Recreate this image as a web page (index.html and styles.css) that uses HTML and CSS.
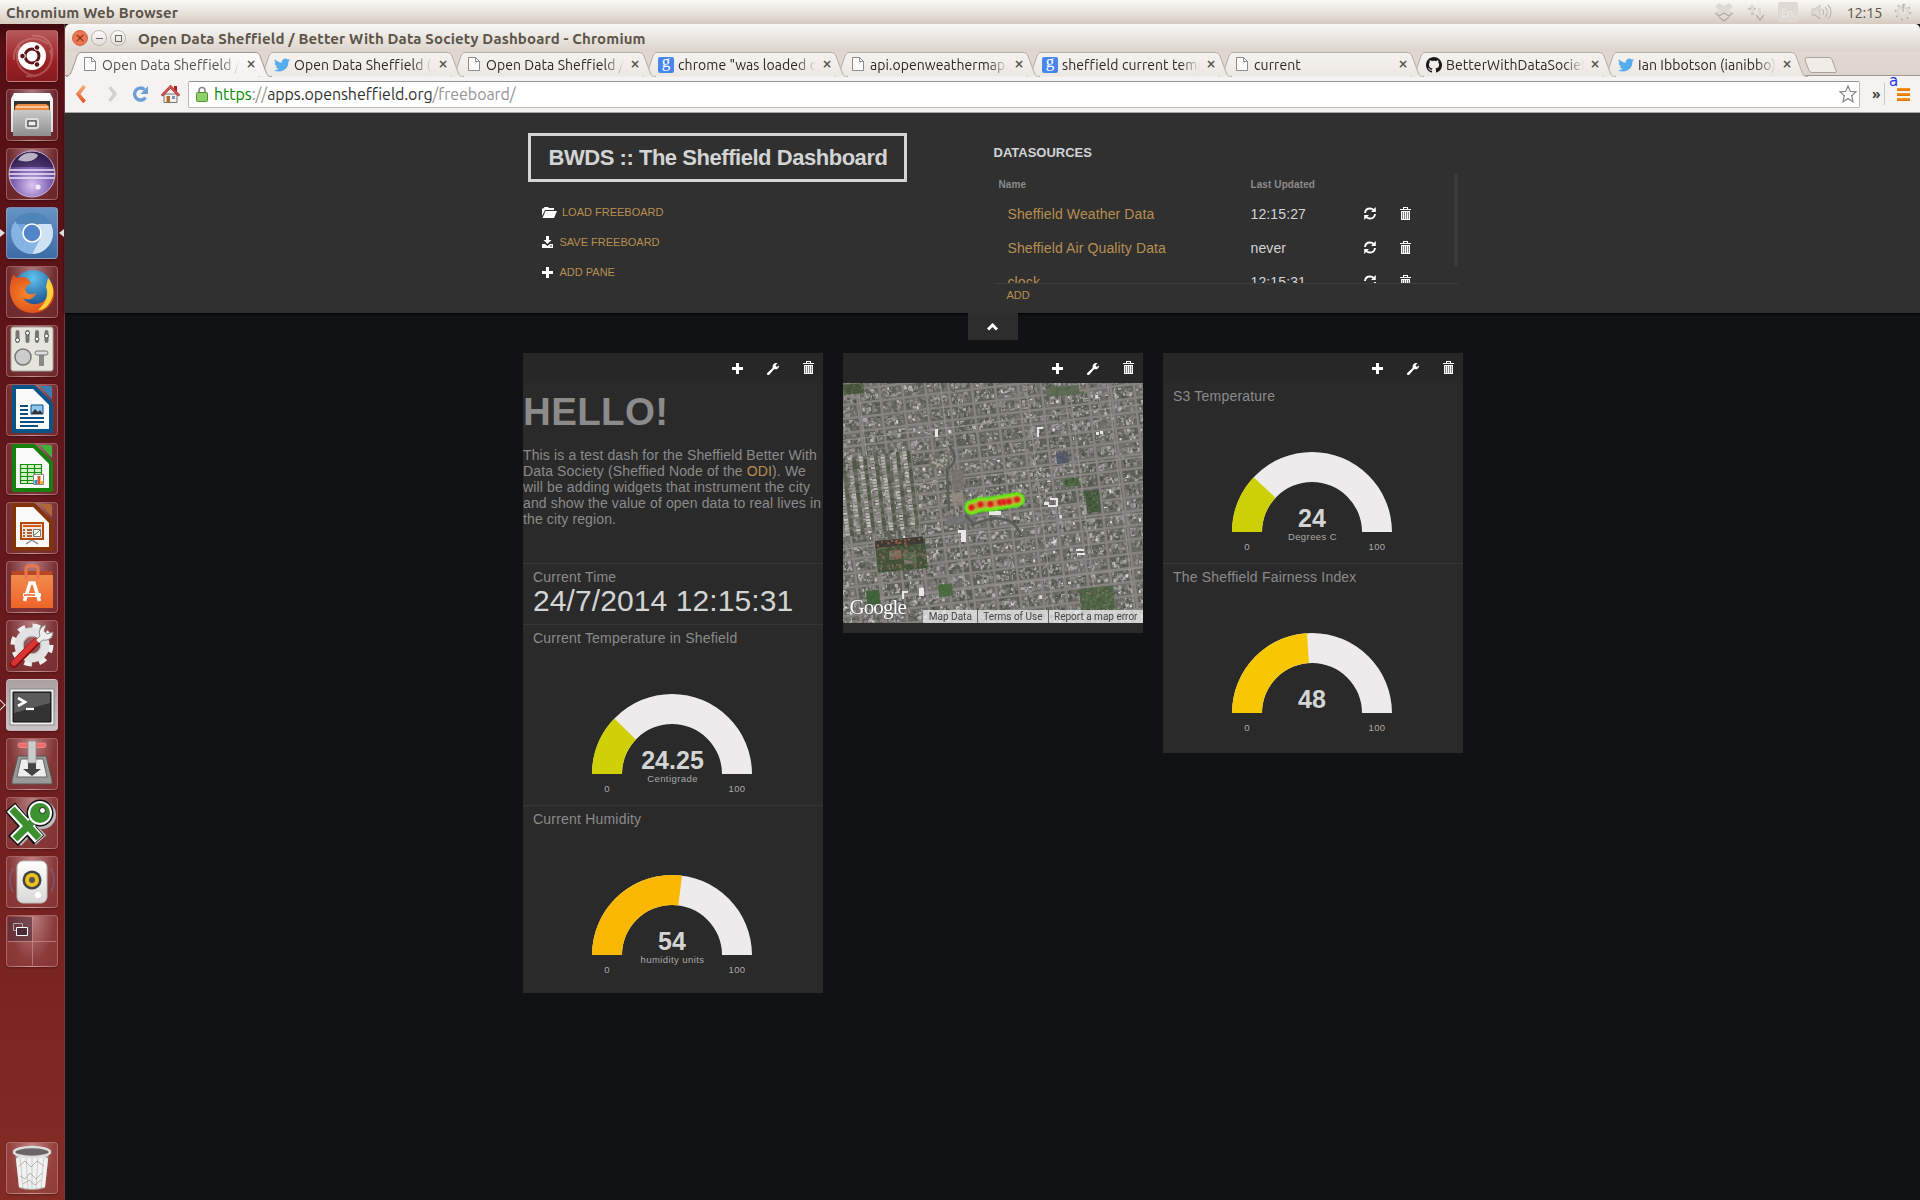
FILE: index.html
```html
<!DOCTYPE html>
<html lang="en">
<head>
<meta charset="utf-8">
<title>Open Data Sheffield / Better With Data Society Dashboard</title>
<link rel="stylesheet" href="styles.css">
</head>
<body>
<svg class="defs" width="0" height="0">
  <defs>
    <linearGradient id="gloss" x1="0" y1="0" x2="0" y2="1"><stop offset="0" stop-color="#fff"/><stop offset="1" stop-color="#d8d8d8"/></linearGradient>
    <linearGradient id="steel" x1="0" y1="0" x2="0" y2="1"><stop offset="0" stop-color="#c9c9c9"/><stop offset="1" stop-color="#8f8f8f"/></linearGradient>
    <linearGradient id="orange" x1="0" y1="0" x2="0" y2="1"><stop offset="0" stop-color="#f7b070"/><stop offset="1" stop-color="#e5532a"/></linearGradient>
    <linearGradient id="bag" x1="0" y1="0" x2="0" y2="1"><stop offset="0" stop-color="#f08a4e"/><stop offset="1" stop-color="#ee6428"/></linearGradient>
    <linearGradient id="tabOn" x1="0" y1="0" x2="0" y2="1"><stop offset="0" stop-color="#fbfaf9"/><stop offset="1" stop-color="#f4f3f2"/></linearGradient>
    <linearGradient id="tabOff" x1="0" y1="0" x2="0" y2="1"><stop offset="0" stop-color="#f6f3f0"/><stop offset="1" stop-color="#ece7e2"/></linearGradient>
    <radialGradient id="orb" cx=".5" cy=".75" r=".7"><stop offset="0" stop-color="#d9c6f2"/><stop offset=".55" stop-color="#8465b4"/><stop offset="1" stop-color="#3a2660"/></radialGradient>
    <radialGradient id="globe" cx=".5" cy=".2" r=".8"><stop offset="0" stop-color="#5cc3ee"/><stop offset="1" stop-color="#123c80"/></radialGradient>
    <radialGradient id="fox" cx=".4" cy=".5" r=".6"><stop offset="0" stop-color="#f5872b"/><stop offset="1" stop-color="#dd4a18"/></radialGradient>
    <symbol id="plus" viewBox="0 0 11 11"><path d="M4 0h3v4h4v3H7v4H4V7H0V4h4z" fill="#fff"/></symbol>
    <symbol id="wrench" viewBox="0 0 12 12"><path d="M0 10.2L5.7 5C5.3 3.2 6 1.4 7.5.6 8.600 0 9.600 0 10.400.300L8.600 2.200 9 3.500 10.300 3.800 12 2.200C12.200 4 11.500 5.300 10.300 5.900 9.300 6.400 8.200 6.400 7.200 6.100L2 12H.8L0 11.200z" fill="#fff"/></symbol>
    <symbol id="trash" viewBox="0 0 11 13"><path d="M3 0h5v2h3v1H0V2h3zM4 1v1h3V1zM1 4h9v9H1z" fill="#fff" fill-rule="evenodd"/><path d="M2.500 5v7M4.500 5v7M6.500 5v7M8.500 5v7" stroke="#777" stroke-width=".9"/></symbol>
    <symbol id="refresh" viewBox="0 0 12 13"><path d="M1 6C1.300 3 3.500 1.500 6 1.500c1.500 0 2.700.500 3.600 1.400M11 7c-.3 3-2.500 4.500-5 4.500-1.500 0-2.700-.5-3.600-1.400" fill="none" stroke="#fff" stroke-width="1.900"/><path d="M11.800 0v5H7zM.2 13V8H5z" fill="#fff"/></symbol>
    <symbol id="page" viewBox="0 0 12 14"><path d="M1 .5h6.500L11.500 4.500V13.500H.5V.5z" fill="#fdfdfd" stroke="#8b8b8b"/><path d="M7.500.5v4h4" fill="none" stroke="#8b8b8b"/></symbol>
    <symbol id="bird" viewBox="0 0 24 24"><path fill="#55acee" d="M24 4.600a10 10 0 0 1-2.800.8 4.900 4.900 0 0 0 2.200-2.700c-1 .6-2 1-3.100 1.200a4.900 4.900 0 0 0-8.400 4.500A14 14 0 0 1 1.700 3.200a4.900 4.900 0 0 0 1.500 6.500c-.8 0-1.600-.2-2.200-.6a4.900 4.900 0 0 0 3.900 4.900c-.7.200-1.500.2-2.200.1a4.900 4.900 0 0 0 4.600 3.400A9.900 9.900 0 0 1 0 19.500a14 14 0 0 0 21.500-12.400A10 10 0 0 0 24 4.600z"/></symbol>
    <symbol id="cat" viewBox="0 0 16 16"><path fill="#1b1817" d="M8 0C3.580 0 0 3.580 0 8c0 3.540 2.290 6.530 5.470 7.590.4.070.55-.17.55-.38 0-.19-.01-.82-.01-1.490-2.010.37-2.530-.49-2.690-.94-.09-.23-.48-.94-.82-1.130-.28-.15-.68-.52-.01-.53.630-.01 1.080.58 1.230.82.720 1.210 1.870.87 2.330.66.070-.52.280-.87.510-1.070-1.780-.2-3.640-.89-3.640-3.950 0-.87.310-1.590.82-2.150-.08-.2-.36-1.020.08-2.120 0 0 .67-.21 2.200.82.640-.18 1.320-.27 2-.27s1.360.09 2 .27c1.530-1.040 2.200-.82 2.200-.82.440 1.100.16 1.920.08 2.120.51.56.82 1.270.82 2.150 0 3.070-1.870 3.750-3.650 3.950.29.250.54.730.54 1.480 0 1.070-.01 1.930-.01 2.200 0 .21.150.46.550.38A8 8 0 0 0 8 0z"/></symbol>
    <symbol id="shapeOn" viewBox="0 0 206 25"><path d="M0 24.500C4 24 5 21 6.500 17L11 4C12 1.500 13 .5 16 .5H189C192 .5 193 1.500 194 4L200 20C201.500 23.500 202 24.500 206 24.500" fill="url(#tabOn)" stroke="#9d9790"/></symbol>
    <symbol id="shapeOff" viewBox="0 0 206 25"><path d="M0 24.500C4 24 5 21 6.500 17L11 4C12 1.500 13 .5 16 .5H189C192 .5 193 1.500 194 4L200 20C201.500 23.500 202 24.500 206 24.500" fill="url(#tabOff)" stroke="#b4aea8"/></symbol>
  </defs>
</svg>

<header class="panel">
  <span class="panel-title">Chromium Web Browser</span>
  <div class="tray">
    <svg width="20" height="20" viewBox="0 0 20 20"><path d="M5 1l5 3 5-3 4 4-4 3 4 3-4 3-5-3-5 3-4-3 4-3-4-3z" fill="#dedad3"/><path d="M1 11l4 3 5-3 5 3 4-3M5 15l5 4 5-4" fill="none" stroke="#b0aaa2" stroke-width="1.100"/></svg>
    <svg width="18" height="20" viewBox="0 0 18 20"><path d="M5 2L1 7h3v5h3V7h2zM13 18l4-5h-3V6h-3v7H9z" fill="#dedad3"/><path d="M1 7h3M7 7h2M4 12h3M9 13l4 5 4-5" fill="none" stroke="#aba59d" stroke-width="1.200"/></svg>
    <span class="lang">En.</span>
    <svg width="21" height="18" viewBox="0 0 21 18"><path d="M1 6h3l5-4v14l-5-4H1z" fill="#dedad3" stroke="#cdc8c0"/><path d="M1 12h3l5 4M12 12c1-2 1-4-1-6M14 14c3-3 3-7 0-10M17 16c4-4 4-10 0-14" fill="none" stroke="#bdb7af" stroke-width="1.200"/></svg>
    <span class="clock">12:15</span>
    <svg width="18" height="18" viewBox="0 0 18 18"><circle cx="9" cy="9" r="5" fill="none" stroke="#dedad3" stroke-width="3"/><circle cx="9" cy="9" r="7.500" fill="none" stroke="#b7b1a9" stroke-width="1.600" stroke-dasharray="2 3.900"/><path d="M9 1v8" stroke="#aaa49c"/></svg>
  </div>
</header>

<nav class="launcher">
  <div class="tile ubuntu"><svg viewBox="0 0 52 52"><path d="M8 30C6 12 26 2 42 14M44 20c6 16-8 28-24 26M26 6c18-2 24 14 18 28M14 16C6 30 14 44 30 46" fill="none" stroke="#d99" stroke-opacity=".4" stroke-width="2"/><circle cx="26" cy="26" r="14" fill="#fff"/><circle cx="26" cy="26" r="7" fill="none" stroke="#5f1418" stroke-width="3"/><g fill="#5f1418" stroke="#fff"><circle cx="16.500" cy="26" r="2.800"/><circle cx="31" cy="17.500" r="2.800"/><circle cx="31" cy="34.500" r="2.800"/></g></svg></div>
  <div class="tile"><svg viewBox="0 0 52 52"><path d="M8 4h36l3 6v33H5V10z" fill="url(#gloss)"/><path d="M8 12h36v11H8z" fill="#333"/><path d="M9 17l3-2h28l3 2v5H9z" fill="#ee8a3c"/><path d="M10 18h32" stroke="#fff"/><path d="M7 21h38v26H7z" fill="url(#steel)"/><rect x="20" y="30" width="12" height="9" rx="2" fill="#aaa" stroke="#ddd" stroke-width="2"/><rect x="22" y="32" width="8" height="5" fill="#eee" stroke="#333"/></svg></div>
  <div class="tile"><svg viewBox="0 0 52 52"><circle cx="26" cy="26" r="23" fill="url(#orb)" stroke="#c9b8de"/><path d="M5 19C7 9 16 4 26 4s19 5 21 15z" fill="#281840" fill-opacity=".55"/><path d="M12 12c4-8 15-9 20-5-2 6-12 8-20 5z" fill="#fff" fill-opacity=".65"/><path d="M3.500 22h45M3 26h46M3.500 30h45" stroke="#eee6fb" stroke-width="1.300"/><circle cx="32" cy="39" r="2.500" fill="#fff" fill-opacity=".8"/></svg></div>
  <div class="tile chromium focused running"><svg viewBox="0 0 52 52"><circle cx="26" cy="26" r="21" fill="#6fa6dc"/><path d="M6 17C14 2 38 1 45 17z" fill="#4f86b7"/><path d="M45 17a21 21 0 0 1-19 30l9-18-3-12z" fill="#cfe2f3"/><path d="M9 14a21 21 0 0 0 17 33l8-15-14-2z" fill="#86b4e2"/><circle cx="26" cy="26" r="9" fill="#5285c8" stroke="#fff" stroke-width="1.600"/></svg></div>
  <div class="tile"><svg viewBox="0 0 52 52"><circle cx="27" cy="24" r="20" fill="url(#globe)"/><path d="M7 9l5 3c4-2 8-1 10 1l3 4-5 4c-2 5 2 8 7 7l3-1c-2 6-8 8-13 5 5 8 17 8 23 1 5-6 5-14 2-20 8 8 8 19 2 26-9 11-27 10-35 0C2 29 3 18 7 9z" fill="url(#fox)"/><path d="M42 12c7 8 7 19 0 27-3 4-6 5-10 5 8-7 11-16 8-23z" fill="#f9d13e"/></svg></div>
  <div class="tile"><svg viewBox="0 0 52 52"><rect x="5" y="2" width="42" height="44" rx="2" fill="#e6e5dd" stroke="#a6a49b"/><g stroke="#777" stroke-width="4" stroke-linecap="round"><path d="M11.500 7v9M21.500 7v9M31 7v9M40.500 7v9"/></g><g fill="#fff" stroke="#555"><circle cx="11.500" cy="15" r="2"/><circle cx="21.500" cy="8" r="2"/><circle cx="31" cy="14" r="2"/><circle cx="40.500" cy="11" r="2"/></g><circle cx="17" cy="32" r="8" fill="#ccc" stroke="#777" stroke-width="1.500"/><path d="M33 28h5v13h-5z" fill="#888"/><rect x="29" y="26" width="13" height="4" rx="2" fill="#ddd" stroke="#777"/></svg></div>
  <div class="tile"><svg viewBox="0 0 52 52"><path d="M8 3h20l17 17v27H8z" fill="#fafafa" stroke="#0a5488" stroke-width="4" stroke-linejoin="round"/><path d="M34 2h10q2 0 2 2v11z" fill="#3c7fb5"/><path d="M14 22h8M14 26h8M14 30h8M14 34h24M14 38h24M14 42h18" stroke="#0a4f83" stroke-width="2"/><path d="M25 21h12v9H25z" fill="#8cc6ee" stroke="#0a4f83"/><path d="M25 30l4-5 3 3 2-2 3 4z" fill="#333"/></svg></div>
  <div class="tile"><svg viewBox="0 0 52 52"><path d="M8 3h20l17 17v27H8z" fill="#fafafa" stroke="#16800c" stroke-width="4" stroke-linejoin="round"/><path d="M34 2h10q2 0 2 2v11z" fill="#41b038"/><path d="M14.500 21.500h21v19h-21zM21.500 21v20M28.500 21v20M14 25.500h22M14 29.500h22M14 33.500h22M14 37.500h22" fill="#cff5c5" stroke="#188a0e" stroke-width="1.200"/><path d="M27.500 31.500h10v10h-10z" fill="#fff" stroke="#888"/><path d="M30 41v-4" stroke="#2b93d6" stroke-width="3"/><path d="M33 41v-8" stroke="#dd5a1b" stroke-width="3"/><path d="M36 41v-3" stroke="#e9b80f" stroke-width="2"/></svg></div>
  <div class="tile"><svg viewBox="0 0 52 52"><path d="M8 3h20l17 17v27H8z" fill="#fafafa" stroke="#823408" stroke-width="4" stroke-linejoin="round"/><path d="M34 2h10q2 0 2 2v11z" fill="#b06738"/><path d="M15 21h22v16H15z" fill="#fbe3d6" stroke="#b3470c" stroke-width="2"/><path d="M17 24h18" stroke="#cf5b1c" stroke-width="2"/><path d="M17 28h2M17 31h2M17 34h2M21 28h5M21 31h5M21 34h5" stroke="#8f3b0b" stroke-width="1.500"/><path d="M27.500 27.500h7v7h-7z" fill="#fff" stroke="#777"/><path d="M28 33l3-2 3-3" fill="none" stroke="#2c9a2c"/><path d="M26 38l-6 4M26 38l6 4" stroke="#888" stroke-width="1.500"/></svg></div>
  <div class="tile"><svg viewBox="0 0 52 52"><path d="M6 10h40v5H6z" fill="#b94822"/><path d="M5 14h42v33H5z" fill="url(#bag)"/><path d="M20 18V8q0-3 3-3h6q3 0 3 3v10" fill="none" stroke="#e8764e" stroke-width="3"/><path d="M18.500 40l5.500-18h4l5.500 18" fill="none" stroke="#fff" stroke-width="3.500"/><rect x="17" y="32" width="18" height="4" rx="1" fill="#fff"/><path d="M18 34h11" stroke="#e8622b" stroke-width="1.500"/></svg></div>
  <div class="tile"><svg viewBox="0 0 52 52"><circle cx="26" cy="25" r="19" fill="none" stroke="#eee" stroke-width="5" stroke-dasharray="7.500 7.420"/><circle cx="26" cy="25" r="13" fill="none" stroke="#e2e2e2" stroke-width="9"/><circle cx="26" cy="25" r="9" fill="none" stroke="#bbb"/><path d="M8 44L30 22" stroke="#8b0d0f" stroke-width="8" stroke-linecap="round"/><path d="M8 43L30 21" stroke="#d93333" stroke-width="5.500" stroke-linecap="round"/><path d="M30 20l4-4c-2-5 1-10 6-11l-2 6 3 3 6-2c0 6-5 9-10 8l-4 3z" fill="#eee" stroke="#888"/></svg></div>
  <div class="tile terminal running-hollow"><svg viewBox="0 0 52 52"><path d="M4 10h44v36H4z" fill="#eee" stroke="#888"/><path d="M7 13h38v30H7z" fill="#333" stroke="#111"/><path d="M8 14h36v10L8 34z" fill="#5a5a5a"/><path d="M12 19l7 4-7 4" fill="none" stroke="#fff" stroke-width="2.600"/><path d="M20 30h8" stroke="#fff" stroke-width="2.200"/></svg></div>
  <div class="tile"><svg viewBox="0 0 52 52"><rect x="12" y="5" width="28" height="4.500" rx="2" fill="#ef6a6a" stroke="#ffa3a0" stroke-width=".6"/><path d="M12 18h28l6 24v4H6v-4z" fill="#999" stroke="#555"/><path d="M15 21h22l4 18H11z" fill="#eee" stroke="#666"/><path d="M22 3h8v28h5l-9 7-9-7h5z" fill="#444"/><path d="M22 3h8v22h-8z" fill="#ccc" stroke="#888" stroke-width=".7"/></svg></div>
  <div class="tile"><svg viewBox="0 0 52 52"><path d="M6 12L35 43M10 44L27 26" stroke="#bbb" stroke-width="14"/><circle cx="36" cy="18" r="14" fill="#bbb"/><path d="M4 10L33 43M7 44L26 25" stroke="#111" stroke-width="14"/><circle cx="34" cy="16" r="13.500" fill="#111"/><path d="M5 11L33 42M8 43L26 25" stroke="#fff" stroke-width="11"/><circle cx="34" cy="16" r="12" fill="#fff"/><path d="M6 12L33 41M9 42L26 25" stroke="#3c8f2d" stroke-width="7"/><circle cx="34" cy="16" r="10" fill="#3c9130"/><circle cx="36.500" cy="13.500" r="3" fill="#fff" stroke="#222"/></svg></div>
  <div class="tile"><svg viewBox="0 0 52 52"><path d="M7 12C3 19 3 29 7 36M45 12c4 7 4 17 0 24" fill="none" stroke="#7078a8" stroke-opacity=".4" stroke-width="2"/><rect x="11" y="5" width="30" height="42" rx="6" fill="url(#gloss)" stroke="#bbb"/><circle cx="26" cy="24" r="9.500" fill="#444"/><circle cx="26" cy="24" r="7" fill="#e9c21d"/><circle cx="26" cy="24" r="3" fill="#555"/><circle cx="32" cy="39" r="3" fill="#fff"/></svg></div>
  <div class="tile spaces"><svg viewBox="0 0 52 52"><path d="M2 2h24v24H2z" fill="#4e2b3a" fill-opacity=".6"/><path d="M26.500 2v48M2 26.500h48" stroke="#c69093" stroke-opacity=".7"/><path d="M7.500 8.500h9v7h-9z" fill="none" stroke="#aaa"/><path d="M10.500 12.500h11v8h-11z" fill="#4e2b3a" stroke="#fff"/></svg></div>
  <div class="tile trashcan"><svg viewBox="0 0 52 52"><path d="M9 9h34l-4 37q-13 4-26 0z" fill="#a9a5a3"/><path d="M10 17l5-4 5 3 6-4 6 4 5-3 5 4-3 28q-13 4-26 0z" fill="#f1f1f0"/><path d="M13 24l6-5 6 6 6-6 7 5M14 34l5 3 5-6 6 6 6-6M17 42l6-4 6 5 6-5" fill="none" stroke="#b5b5b5"/><path d="M14 14l3 32M20 14l2 33M26 14v34M32 14l-2 33M38 14l-3 32" stroke="#999" stroke-opacity=".4"/><ellipse cx="26" cy="10" rx="18" ry="5" fill="#6a6666" stroke="#ddd" stroke-width="2.500"/></svg></div>
</nav>

<main class="window">
  <div class="titlebar">
    <span class="win-btn close">×</span><span class="win-btn"><i class="bar"></i></span><span class="win-btn"><i class="box"></i></span>
    <span class="win-title">Open Data Sheffield / Better With Data Society Dashboard - Chromium</span>
  </div>
  <div class="tabs">
    <div class="tab on"><svg class="shape"><use href="#shapeOn"/></svg><svg class="fav pg"><use href="#page"/></svg><span class="label">Open Data Sheffield / B</span><span class="x">×</span></div>
    <div class="tab"><svg class="shape"><use href="#shapeOff"/></svg><svg class="fav"><use href="#bird"/></svg><span class="label">Open Data Sheffield (O</span><span class="x">×</span></div>
    <div class="tab"><svg class="shape"><use href="#shapeOff"/></svg><svg class="fav pg"><use href="#page"/></svg><span class="label">Open Data Sheffield / B</span><span class="x">×</span></div>
    <div class="tab"><svg class="shape"><use href="#shapeOff"/></svg><span class="fav g">g</span><span class="label">chrome "was loaded ov</span><span class="x">×</span></div>
    <div class="tab"><svg class="shape"><use href="#shapeOff"/></svg><svg class="fav pg"><use href="#page"/></svg><span class="label">api.openweathermap.o</span><span class="x">×</span></div>
    <div class="tab"><svg class="shape"><use href="#shapeOff"/></svg><span class="fav g">g</span><span class="label">sheffield current temp</span><span class="x">×</span></div>
    <div class="tab"><svg class="shape"><use href="#shapeOff"/></svg><svg class="fav pg"><use href="#page"/></svg><span class="label">current</span><span class="x">×</span></div>
    <div class="tab"><svg class="shape"><use href="#shapeOff"/></svg><svg class="fav"><use href="#cat"/></svg><span class="label">BetterWithDataSociety</span><span class="x">×</span></div>
    <div class="tab"><svg class="shape"><use href="#shapeOff"/></svg><svg class="fav"><use href="#bird"/></svg><span class="label">Ian Ibbotson (ianibbo)</span><span class="x">×</span></div>
    <svg class="newtab" width="33" height="17" viewBox="0 0 33 17"><path d="M4 .5h21q2 0 3 2l4 11q1 2-1 2H8q-2 0-3-2L1 3Q.5.5 4 .5z" fill="#f0ece8" stroke="#aaa39c"/></svg>
  </div>
  <div class="toolbar">
    <div class="nav-btns">
      <svg width="12" height="20" viewBox="0 0 12 20"><path d="M9.500 2L3 10l6.500 8" fill="none" stroke="url(#orange)" stroke-width="3.600"/></svg>
      <svg width="12" height="20" viewBox="0 0 12 20"><path d="M2.500 3L8 10l-5.500 7" fill="none" stroke="#d3d1cf" stroke-width="3.400"/></svg>
      <svg width="17" height="18" viewBox="0 0 17 18"><path d="M13.500 12.500A6 6 0 1 1 12.500 4.500" fill="none" stroke="#6d9fd6" stroke-width="3.400"/><path d="M16 1v8H8.500z" fill="#6d9fd6"/></svg>
      <svg width="19" height="18" viewBox="0 0 19 18"><path d="M13 1h3v6h-3z" fill="#a22"/><path d="M3 9h13v8.500H3z" fill="#f0eeea" stroke="#777"/><path d="M9.500 0L19 10l-2 1-7.500-7.500L2 11l-2-1z" fill="#d2504c" stroke="#a23030" stroke-width=".6"/><path d="M5.500 11h3.500v6.500H5.500z" fill="#b46a28"/><path d="M11 11h3v3h-3z" fill="#7898c8"/></svg>
    </div>
    <div class="omnibox">
      <svg width="12" height="16" viewBox="0 0 12 16"><path d="M3 8V4.500a3 3 0 0 1 6 0V8" fill="none" stroke="#888" stroke-width="1.700"/><rect x=".5" y="6.500" width="11" height="9" rx="1" fill="#8fd06a" stroke="#55912f"/></svg>
      <span class="url"><b>https</b><i>://</i>apps.opensheffield.org<i>/freeboard/</i></span>
      <svg class="star" width="18" height="18" viewBox="0 0 18 18"><path d="M9 1l2.300 5.400 5.700.5-4.300 3.900 1.300 5.900L9 13.600 4 16.700l1.300-5.900L1 6.900l5.700-.5z" fill="#fff" stroke="#8c8c8c" stroke-width="1.300"/></svg>
    </div>
    <span class="more">»</span>
    <i class="sep"></i>
    <span class="menu"><em>a</em><i></i><i></i><i></i></span>
  </div>

  <div class="page">
    <section class="admin">
      <div class="admin-inner">
        <div class="left">
          <h1>BWDS :: The Sheffield Dashboard</h1>
          <ul class="actions">
            <li><svg width="15" height="11" viewBox="0 0 15 11"><path d="M0 9V1.500h1.500L2.500 0H6l1 1h5v2H3z" fill="#fff"/><path d="M3.500 4H15l-3 7H.5z" fill="#fff"/></svg><a>LOAD FREEBOARD</a></li>
            <li><svg width="11" height="12" viewBox="0 0 11 12"><path d="M4 0h3v4h2.500L5.500 8 1.500 4H4zM0 8h3l2.500 2L8 8h3v4H0z" fill="#fff"/><path d="M8 10h2" stroke="#333"/></svg><a>SAVE FREEBOARD</a></li>
            <li><svg width="11" height="11"><use href="#plus"/></svg><a>ADD PANE</a></li>
          </ul>
        </div>
        <div class="sources">
          <h2>DATASOURCES</h2>
          <div class="list">
            <div class="row head"><span>Name</span><span>Last Updated</span></div>
            <div class="row"><a>Sheffield Weather Data</a><span>12:15:27</span><svg width="12" height="13"><use href="#refresh"/></svg><svg width="11" height="13"><use href="#trash"/></svg></div>
            <div class="row"><a>Sheffield Air Quality Data</a><span>never</span><svg width="12" height="13"><use href="#refresh"/></svg><svg width="11" height="13"><use href="#trash"/></svg></div>
            <div class="row"><a>clock</a><span>12:15:31</span><svg width="12" height="13"><use href="#refresh"/></svg><svg width="11" height="13"><use href="#trash"/></svg></div>
            <i class="thumb"></i>
          </div>
          <a class="add">ADD</a>
        </div>
      </div>
    </section>
    <div class="toggle"><svg width="11" height="8" viewBox="0 0 11 8"><path d="M1 6.500L5.500 2 10 6.500" fill="none" stroke="#fff" stroke-width="3"/></svg></div>

    <section class="board">
      <article class="pane tall">
        <header><svg width="11" height="11"><use href="#plus"/></svg><svg width="12" height="12"><use href="#wrench"/></svg><svg class="bin" width="11" height="13"><use href="#trash"/></svg></header>
        <div class="widget intro"><h3>HELLO!</h3><p>This is a test dash for the Sheffield Better With Data Society (Sheffied Node of the <a>ODI</a>). We will be adding widgets that instrument the city and show the value of open data to real lives in the city region.</p></div>
        <div class="widget time"><h4>Current Time</h4><div class="big">24/7/2014 12:15:31</div></div>
        <div class="widget"><h4>Current Temperature in Shefield</h4><svg class="gauge" viewBox="0 0 300 153"><path class="track" d="M69 122A80 80 0 0 1 229 122H199A50 50 0 0 0 99 122z"/><path fill="#cfd006" d="M69 122A80 80 0 0 1 91.300 66.600L112.900 87.400A50 50 0 0 0 99 122z"/><text class="val" x="149.500" y="117">24.25</text><text class="unit" x="149.500" y="130">Centigrade</text><text class="unit" x="84" y="140">0</text><text class="unit" x="214" y="140">100</text></svg></div>
        <div class="widget"><h4>Current Humidity</h4><svg class="gauge" viewBox="0 0 300 153"><path class="track" d="M69 122A80 80 0 0 1 229 122H199A50 50 0 0 0 99 122z"/><path fill="#fab802" d="M69 122A80 80 0 0 1 159 42.600L155.300 72.400A50 50 0 0 0 99 122z"/><text class="val" x="149" y="117">54</text><text class="unit" x="149.500" y="130">humidity units</text><text class="unit" x="84" y="140">0</text><text class="unit" x="214" y="140">100</text></svg></div>
      </article>
      <article class="pane short">
        <header><svg width="11" height="11"><use href="#plus"/></svg><svg width="12" height="12"><use href="#wrench"/></svg><svg class="bin" width="11" height="13"><use href="#trash"/></svg></header>
        <div class="map"><canvas id="map" width="300" height="240"></canvas><span class="google">Google</span><div class="credits"><span>Map Data</span><span>Terms of Use</span><span>Report a map error</span></div></div>
      </article>
      <article class="pane mid">
        <header><svg width="11" height="11"><use href="#plus"/></svg><svg width="12" height="12"><use href="#wrench"/></svg><svg class="bin" width="11" height="13"><use href="#trash"/></svg></header>
        <div class="widget first"><h4>S3 Temperature</h4><svg class="gauge" viewBox="0 0 300 153"><path class="track" d="M69 122A80 80 0 0 1 229 122H199A50 50 0 0 0 99 122z"/><path fill="#ced006" d="M69 122A80 80 0 0 1 90.700 67.200L112.600 87.800A50 50 0 0 0 99 122z"/><text class="val" x="149" y="117">24</text><text class="unit" x="149.500" y="130">Degrees C</text><text class="unit" x="84" y="140">0</text><text class="unit" x="214" y="140">100</text></svg></div>
        <div class="widget"><h4>The Sheffield Fairness Index</h4><svg class="gauge" viewBox="0 0 300 153"><path class="track" d="M69 122A80 80 0 0 1 229 122H199A50 50 0 0 0 99 122z"/><path fill="#f7c802" d="M69 122A80 80 0 0 1 144 42.200L145.900 72.100A50 50 0 0 0 99 122z"/><text class="val" x="149" y="117">48</text><text class="unit" x="84" y="140">0</text><text class="unit" x="214" y="140">100</text></svg></div>
      </article>
    </section>
  </div>
</main>
<script src="map.js"></script>
</body>
</html>
```
FILE: styles.css
```css
* { box-sizing: border-box; }
body {
  margin: 0; width: 1920px; height: 1200px; overflow: hidden;
  display: grid; grid-template: 24px 1176px / 65px 1855px;
  background: #101214; font-family: "Liberation Sans", Arial, sans-serif;
}
svg { display: block; flex: none; }
.defs { position: absolute; }
.panel {
  grid-column: 1 / 3; display: flex; justify-content: space-between; align-items: center;
  padding: 0 8px 0 6px; background: linear-gradient(#faf8f6, #e9e4dd 50%, #d5cabf);
  font-family: Ubuntu, "Noto Sans", sans-serif; color: #5b5449;
}
.panel-title { font-size: 15px; font-weight: 700; letter-spacing: .15px; }
.tray { display: flex; align-items: center; gap: 13px; font-size: 15px; }
.lang { width: 20px; height: 20px; border-radius: 2px; background: #dedad3; color: #eeebe7; font-size: 11px; line-height: 22px; text-align: center; }
.clock { letter-spacing: -.4px; margin: 0 -1px 0 1px; }

.launcher {
  display: flex; flex-direction: column; gap: 7px; padding: 6px 0 6px 6px;
  border-right: 1px solid #743a3e;
  background: linear-gradient(#3e080d, #560f15 20px, #5d1419 300px, #6a1b1e 650px, #7a2421 950px, #842b25);
}
.tile {
  position: relative; width: 52px; height: 52px; flex: none; border-radius: 4px; border: 1px solid rgba(255,210,210,.3);
  background: radial-gradient(ellipse at 50% 0, rgba(255,225,225,.5), rgba(255,210,210,.14) 65%, rgba(255,210,210,.1));
  box-shadow: 0 1px 2px rgba(0,0,0,.3);
}
.tile svg { width: 52px; height: 52px; margin: -1px; }
.ubuntu { background: linear-gradient(#b5585a, #9c2124 60%, #861a1e); }
.chromium { background: linear-gradient(#6694c4, #3d6ba5); }
.terminal { background: linear-gradient(#aaa1a2, #c8c2c3); }
.running::before, .focused::after, .running-hollow::before { content: ""; position: absolute; top: 21px; border: 4px solid transparent; }
.running::before { left: -7px; border-left: 5px solid #ddd; border-right: 0; }
.focused::after { right: -7px; border-right: 5px solid #ddd; border-left: 0; }
.running-hollow::before { left: -11px; width: 7px; height: 7px; border: 1px solid #ddd; border-left: 0; border-bottom: 0; transform: rotate(45deg); }
.trashcan { margin-top: auto; }

.window { display: flex; flex-direction: column; background: #101214; }
.titlebar {
  height: 28px; display: flex; align-items: center; gap: 3px; padding-left: 7px; border-radius: 5px 5px 0 0;
  background: linear-gradient(#f9f7f5, #e6e1db 60%, #ddd4cc);
  font-family: Ubuntu, "Noto Sans", sans-serif;
}
.win-btn { width: 16px; height: 16px; border-radius: 50%; border: 1px solid #bcb5ac; background: linear-gradient(#fdfcfb, #e2ddd7); display: flex; align-items: center; justify-content: center; }
.close { background: #ef7550; border-color: #c9694c; color: #73301b; font: 400 13px/14px "DejaVu Sans", sans-serif; }
.bar { width: 7px; height: 1px; background: #6b665f; }
.box { width: 7px; height: 7px; border: 1px solid #6b665f; }
.win-title { margin: 1px 0 0 9px; font-size: 15px; letter-spacing: .15px; font-weight: 700; color: #5b5449; white-space: nowrap; }

.tabs { position: relative; height: 24px; display: flex; padding-left: 1px; background: linear-gradient(#e0d9d2, #ddd4cd); border-bottom: 1px solid #9d9790; }
.tab { position: relative; width: 192px; flex: none; display: flex; align-items: center; padding: 0 0 0 17px; font-family: Ubuntu, "Noto Sans", sans-serif; font-size: 14px; letter-spacing: .07px; color: #2b2723; }
.tab:nth-child(1) { z-index: 10; color: #55504a; } .tab:nth-child(2) { z-index: 8; } .tab:nth-child(3) { z-index: 7; }
.tab:nth-child(4) { z-index: 6; } .tab:nth-child(5) { z-index: 5; } .tab:nth-child(6) { z-index: 4; }
.tab:nth-child(7) { z-index: 3; } .tab:nth-child(8) { z-index: 2; } .tab:nth-child(9) { z-index: 1; }
.shape { position: absolute; left: 0; top: 0; width: 206px; height: 25px; overflow: visible; }
.fav { position: relative; width: 16px; height: 16px; margin: 2px 4px 0 -1px; flex: none; }
.fav.pg { width: 12px; height: 14px; margin: 1px 6px 0 1px; }
.fav.g { background: #4787ed; border-radius: 2px; color: #fff; font: 17px/10px "Liberation Serif", serif; text-align: center; }
.label { position: relative; width: 139px; margin-top: 2px; overflow: hidden; white-space: nowrap; -webkit-mask-image: linear-gradient(90deg, #000 118px, transparent 138px); mask-image: linear-gradient(90deg, #000 118px, transparent 138px); }
.x { position: relative; margin: 1px 0 0 5px; font: 700 12px/20px "DejaVu Sans", sans-serif; color: #57534d; }
.newtab { margin: 5px 0 0 10px; }

.toolbar { position: relative; height: 37px; display: flex; align-items: center; background: #f4f3f2; border-bottom: 1px solid #a6a6a4; padding: 0 9px; }
.nav-btns { width: 114px; display: flex; align-items: center; gap: 18px; padding-left: 1px; }
.nav-btns svg:nth-child(2) { margin-left: 2px; }
.nav-btns svg:nth-child(3) { margin-left: -5px; }
.nav-btns svg:nth-child(4) { margin-left: -6px; }
.omnibox { width: 1672px; height: 27px; display: flex; align-items: center; padding: 0 2px 0 7px; background: #fff; border: 1px solid #bbb8b4; border-top-color: #99958f; border-radius: 2px; }
.url { margin-left: 6px; font: 16px Ubuntu, "Noto Sans", sans-serif; letter-spacing: -.07px; color: #333; white-space: nowrap; }
.url b { font-weight: 400; color: #008a00; }
.url i { font-style: normal; color: #959595; }
.star { margin-left: auto; }
.more { margin: -2px 0 0 12px; width: 12px; font: 700 14px "Noto Sans", sans-serif; color: #444; }
.sep { width: 1px; height: 22px; background: #ccc9c5; }
.menu { position: relative; margin: 0 0 0 12px; display: grid; gap: 2px; }
.menu i { width: 13px; height: 3px; background: linear-gradient(#f9a01c, #e06f08); }
.menu em { position: absolute; left: -8px; top: -15px; font: normal 15px/16px "DejaVu Sans", sans-serif; color: #1e38f0; }

.page { flex: 1; }
.admin { height: 200px; background: #303030; box-shadow: 0 1px 3px #000; }
.admin-inner { width: 940px; margin: 0 auto; display: flex; }
.left { width: 471px; padding: 20px 0 0 5px; }
h1, h2, h3, h4, p, ul { margin: 0; padding: 0; }
h1 { width: 379px; height: 49px; border: 3px solid #d3d4d4; padding-left: 18px; font-size: 22px; line-height: 43px; letter-spacing: -.46px; color: #d3d4d4; white-space: nowrap; }
.actions { list-style: none; padding: 15px 0 0 14px; }
.actions li { height: 30px; display: flex; align-items: center; gap: 7px; }
.actions li:first-child { gap: 5.500px; }
a { color: #b88f51; }
.actions a, .add { font-size: 11px; }
.sources { width: 464px; padding-top: 32px; }
h2 { font-size: 13px; line-height: 15px; color: #d3d4d4; }
.list { position: relative; height: 111px; margin-top: 13px; overflow: hidden; border-bottom: 1px solid #3d3d3d; }
.row { height: 34px; display: grid; grid-template-columns: 243px 113px 36px 40px; padding: 0 0 1px 14px; align-items: center; font-size: 14px; letter-spacing: .12px; color: #d3d4d4; white-space: nowrap; }
.head { height: 24px; padding-left: 5px; grid-template-columns: 252px 200px; font-size: 10px; font-weight: 700; letter-spacing: .1px; color: #8b8b8b; }
.thumb { position: absolute; right: 0; top: 0; width: 4px; height: 94px; border-radius: 2px; background: #3a3a3a; }
.add { display: block; padding: 5px 0 0 13px; }
.toggle { width: 50px; height: 27px; margin: 0 auto; display: flex; align-items: center; justify-content: center; background: #2d2d2d; }

.board { width: 940px; margin: 13px auto 0; display: flex; gap: 20px; align-items: flex-start; }
.pane { width: 300px; background: #2a2a2a; }
.tall { height: 640px; } .short { height: 280px; } .mid { height: 400px; }
.pane header { height: 30px; display: flex; gap: 24px; justify-content: flex-end; align-items: center; padding: 1px 9px 0 0; background: #272727; }
.bin { margin-top: -2px; }
.widget { height: 181px; border-top: 1px solid #363636; color: #8b8b8b; }
.widget.first { height: 180px; border: 0; }
.widget.time { height: 61px; }
.widget.intro { height: 180px; border: 0; }
h4 { height: 27px; padding: 5px 10px 0 10.500px; font-size: 14px; letter-spacing: .2px; line-height: 16px; font-weight: 400; }
.time h4 { height: 19px; }
.big { padding-left: 10.500px; font-size: 30px; letter-spacing: .1px; line-height: 36px; color: #d3d4d4; }
h3 { font-size: 38.500px; line-height: 44px; letter-spacing: .35px; padding: 7px 0 0 .5px; }
.intro p { margin-top: 13px; padding-left: .5px; font-size: 14px; letter-spacing: .13px; line-height: 16px; white-space: normal; margin-right: -4px; padding-right: 4px; }
.gauge { width: 300px; height: 153px; }
.track { fill: #edebeb; }
.val { font: 700 25px "Liberation Sans", sans-serif; fill: #d3d4d4; text-anchor: middle; }
.unit { font: 9.500px "Liberation Sans", sans-serif; letter-spacing: .42px; fill: #a9a9a9; text-anchor: middle; }
.map { position: relative; height: 240px; }
.map canvas { display: block; }
.google { position: absolute; left: 7px; bottom: 4px; font: 21px/24px "Liberation Serif", serif; letter-spacing: -.9px; color: #fff; text-shadow: 0 0 2px #444; }
.credits { position: absolute; right: 0; bottom: 0; height: 13px; display: flex; background: rgba(245,245,245,.72); font: 10px/13px Roboto, sans-serif; color: #444; white-space: nowrap; }
.credits span { padding: 0 5px 0 5.500px; }
.credits span + span { border-left: 1px solid #666; }
```
FILE: map.js
```js
// Aerial street grid with a heat trail on top, drawn with a seeded generator.
const c = document.getElementById('map').getContext('2d');
let seed = 7;
const rnd = () => (seed = (seed * 16807) % 2147483647) / 2147483647;
const pick = a => a[Math.floor(rnd() * a.length)];
c.fillStyle = '#868381';
c.fillRect(0, 0, 300, 240);
c.save();
c.translate(150, 120);
c.rotate(-0.12);
const tones = ['#555a50', '#5f625a', '#6b6b66', '#777571', '#7d7a77', '#85827f', '#8d8a88', '#949190', '#a5a3a2', '#50574a', '#b3b0ae'];
for (let by = -170; by < 170; by += 14) {
  for (let bx = -190; bx < 190; bx += 23) {
    c.fillStyle = pick(['#5c6056', '#686960', '#6f6e69']);
    c.fillRect(bx, by, 20.500, 11.500);
    for (let i = 0; i < 48; i++) {
      c.fillStyle = rnd() < 0.014 ? '#dcdad8' : pick(tones);
      c.fillRect(bx + rnd() * 18, by + rnd() * 9, 1 + rnd() * 2.4, 1 + rnd() * 2.8);
    }
  }
}
c.strokeStyle = 'rgba(152,149,147,.75)';
c.lineWidth = 1.5;
[-80, -28, 28, 82].forEach(y => { c.beginPath(); c.moveTo(-190, y); c.lineTo(190, y); c.stroke(); });
[-120, -38, 47, 90, 128].forEach(x => { c.beginPath(); c.moveTo(x, -170); c.lineTo(x, 170); c.stroke(); });
// Terraced rows west of the ring road.
for (let x = -150; x < -82; x += 11) {
  for (let y = -62; y < 14; y += 3) {
    c.fillStyle = pick(['#b3afac', '#99958f', '#8b8783', '#c2bfbc']);
    c.fillRect(x, y, 4, 2);
    c.fillStyle = pick(['#4d5843', '#5b6251', '#6a6c62']);
    c.fillRect(x + 4.5, y, 3.5, 3);
  }
}
c.restore();
function patch(x, y, w, h, fill, specks) {
  c.save();
  c.translate(x, y);
  c.rotate(-0.1);
  c.fillStyle = fill;
  c.fillRect(0, 0, w, h);
  for (let i = 0; i < w * h / 6; i++) {
    c.fillStyle = pick(specks);
    c.fillRect(rnd() * (w - 2), rnd() * (h - 2), 2, 2);
  }
  c.restore();
}
const green = ['#465a3c', '#3d4f35', '#53634a', '#5f6b53'];
patch(32, 160, 50, 30, '#44523a', green.concat('#8d6755'));
patch(32, 158, 48, 7, '#3e3c36', ['#4b4038', '#915b46', '#3a3833']);
patch(46, 168, 12, 9, '#8f6a5b', ['#94604c', '#777', '#51604a']);
patch(60, 170, 13, 12, '#5f6a52', ['#8e7a6a', '#777', '#51604a']);
patch(0, 2, 20, 10, '#465139', green);
patch(203, 5, 33, 9, '#5c6a53', ['#53634a', '#64715a']);
patch(236, 206, 34, 23, '#4f6346', ['#465a3c', '#53634a', '#5f7050', '#77765c']);
patch(242, 108, 14, 22, '#475b42', green);
patch(221, 96, 15, 8, '#4e6a40', green);
patch(95, 202, 14, 12, '#4c6b40', ['#4f6e43', '#48673d']);
patch(23, 208, 13, 14, '#42623d', ['#45663f', '#3f5e3a']);
patch(108, 88, 12, 20, '#76736f', ['#706e6a', '#7c7975']);
patch(108, 110, 12, 10, '#8d867a', ['#938b80']);
patch(104, 134, 28, 9, '#757474', ['#7c7b7b', '#6e6e6e']);
patch(213, 70, 12, 11, '#525666', ['#5c5f6c']);
patch(86, 72, 20, 14, '#77746f', ['#aaa6a1', '#626d58']);
c.strokeStyle = '#595d57';
c.lineWidth = 2.5;
c.beginPath();
c.moveTo(106, 62);
c.quadraticCurveTo(118, 78, 104, 86);
c.lineTo(105, 108);
c.lineTo(106, 128);
c.moveTo(122, 132);
c.lineTo(131, 141);
c.quadraticCurveTo(168, 126, 178, 152);
c.stroke();
c.fillStyle = '#e9e7e5';
[[115, 147, 8, 3], [118, 150, 5, 9], [201, 119, 5, 3], [207, 115, 8, 2], [213, 115, 2, 8], [205, 122, 9, 2], [233, 166, 8, 2], [234, 170, 8, 2], [92, 46, 3, 8], [194, 44, 6, 2], [194, 46, 2, 8], [253, 49, 3, 3], [257, 48, 3, 3], [59, 208, 2, 8], [59, 208, 6, 2], [146, 128, 12, 4], [76, 205, 5, 8]].forEach(r => c.fillRect(...r));
// Heat trail: green halo, yellow core, red hot spots.
const trail = (w, col) => {
  c.strokeStyle = col;
  c.lineWidth = w;
  c.lineCap = 'round';
  c.lineJoin = 'round';
  c.beginPath();
  c.moveTo(128.500, 124.500);
  c.lineTo(137, 121.500);
  c.lineTo(148, 121);
  c.lineTo(174.500, 116.500);
  c.stroke();
};
trail(15.500, 'rgba(80,235,20,.6)');
trail(13, '#6fe513');
trail(9.500, '#9fcf2c');
trail(6, '#c9953a');
[[128.500, 124.500], [137.500, 121.500], [147.500, 121], [157, 119.500], [161, 119], [166, 118.500], [174, 116.500]].forEach(([x, y]) => {
  const g = c.createRadialGradient(x, y, 0, x, y, 4.500);
  g.addColorStop(0, '#e1101a');
  g.addColorStop(0.4, '#d92a20');
  g.addColorStop(1, 'rgba(215,80,30,0)');
  c.fillStyle = g;
  c.fillRect(x - 5, y - 5, 10, 10);
});
```
